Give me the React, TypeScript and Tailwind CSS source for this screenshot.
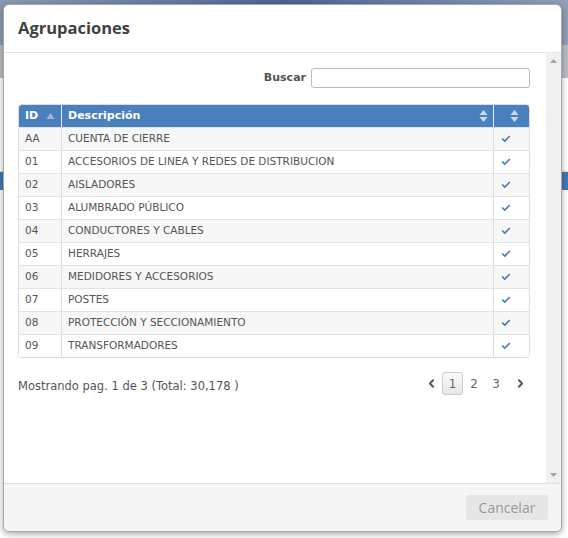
import { Check, ChevronLeft, ChevronRight } from 'lucide-react'

const rows = [
    { id: 'AA', desc: 'CUENTA DE CIERRE' },
    { id: '01', desc: 'ACCESORIOS DE LINEA Y REDES DE DISTRIBUCION' },
    { id: '02', desc: 'AISLADORES' },
    { id: '03', desc: 'ALUMBRADO PÚBLICO' },
    { id: '04', desc: 'CONDUCTORES Y CABLES' },
    { id: '05', desc: 'HERRAJES' },
    { id: '06', desc: 'MEDIDORES Y ACCESORIOS' },
    { id: '07', desc: 'POSTES' },
    { id: '08', desc: 'PROTECCIÓN Y SECCIONAMIENTO' },
    { id: '09', desc: 'TRANSFORMADORES' },
]

function SortBoth() {
    return (
        <svg width="9" height="14" viewBox="0 0 9 14">
            <path d="M4.5 1 L8.5 6 L0.5 6 Z" fill="#c9d9ee" />
            <path d="M4.5 13 L8.5 8 L0.5 8 Z" fill="#c9d9ee" />
        </svg>
    )
}

function SortUp() {
    return (
        <svg width="9" height="8" viewBox="0 0 9 8">
            <path d="M4.5 1 L8.5 7 L0.5 7 Z" fill="#9fb6d6" />
        </svg>
    )
}

export default function App() {
    return (
        <div className="w-[568px] h-[538px] relative overflow-hidden bg-white" style={{ fontFamily: '"DejaVu Sans", Verdana, sans-serif' }}>
            {/* page behind the dialog */}
            <div className="absolute inset-0 flex flex-col">
                <div className="h-[45px] bg-[linear-gradient(90deg,#8b9ab4,#4c6694,#8fa0bb)]" />
                <div className="h-[33px] bg-[#b8bec6]" />
                <div className="h-[94px] bg-white border-b border-[#ddd]" />
                <div className="h-[18px] bg-[#3f79b6]" />
                <div className="flex-1 bg-white" />
            </div>

            <div className="relative pt-[4px] pl-[3px]">
                <div className="w-[559px] h-[528px] bg-white rounded-[6px] border border-[#a8a8a8] shadow-[0_2px_6px_rgba(0,0,0,0.35)] flex flex-col overflow-hidden">
                    {/* header */}
                    <div className="h-[48px] shrink-0 border-b border-[#e5e5e5] flex items-center pl-[14px]">
                        <h3 className="text-[16.5px] font-bold text-[#3f3f3f]" style={{ fontFamily: '"Open Sans", sans-serif' }}>Agrupaciones</h3>
                    </div>

                    {/* body */}
                    <div className="flex-1 flex min-h-0">
                        <div className="flex-1 pl-[14px] pr-[16px] pt-[15px]">
                            <div className="flex justify-end items-center gap-[5px]">
                                <span className="text-[11px] font-bold text-[#555]">Buscar</span>
                                <input className="w-[219px] h-[20px] border border-[#bbb] rounded-[3px] outline-none" />
                            </div>

                            <div className="mt-[16px] border border-[#ddd] rounded-[4px] overflow-hidden">
                                <div className="flex h-[22px] bg-[#4a80bd] text-white text-[11px] font-bold">
                                    <div className="w-[43px] flex items-center justify-between pl-[6px] pr-[6px] border-r border-[#e6eef7]">
                                        <span>ID</span>
                                        <SortUp />
                                    </div>
                                    <div className="flex-1 flex items-center justify-between pl-[6px] pr-[5px] border-r border-[#e6eef7]">
                                        <span>Descripción</span>
                                        <SortBoth />
                                    </div>
                                    <div className="w-[35px] flex items-center justify-end pr-[10px]">
                                        <SortBoth />
                                    </div>
                                </div>
                                {rows.map((r, i) => (
                                    <div key={r.id} className={`flex h-[23px] border-t border-[#e3e3e3] text-[10.5px] text-[#555] ${i % 2 === 0 ? 'bg-[#f7f7f7]' : 'bg-white'}`}>
                                        <div className="w-[43px] flex items-center pl-[6px] border-r border-[#ddd]">{r.id}</div>
                                        <div className="flex-1 flex items-center pl-[6px] border-r border-[#ddd]">{r.desc}</div>
                                        <div className="w-[35px] flex items-center pl-[7px]">
                                            <Check className="w-[10px] h-[10px] text-[#4a7bbd]" strokeWidth={4} />
                                        </div>
                                    </div>
                                ))}
                            </div>

                            <div className="flex items-start justify-between mt-[14px]">
                                <span className="text-[11.5px] text-[#555] pt-[6px]">Mostrando pag. 1 de 3 (Total: 30,178 )</span>
                                <div className="flex items-center text-[12px] text-[#666] mr-[3px]">
                                    <ChevronLeft className="w-[13px] h-[13px] text-[#555] mr-[4px]" strokeWidth={3.5} />
                                    <span className="w-[21px] h-[23px] flex items-center justify-center rounded-[3px] border border-[#ccc] bg-[linear-gradient(#fafafa,#e8e8e8)]">1</span>
                                    <span className="w-[22px] text-center">2</span>
                                    <span className="w-[22px] text-center">3</span>
                                    <ChevronRight className="w-[13px] h-[13px] text-[#555] ml-[7px]" strokeWidth={3.5} />
                                </div>
                            </div>
                        </div>

                        {/* scrollbar */}
                        <div className="w-[15px] bg-[#f0f0f0] flex flex-col items-center justify-between py-[6px]">
                            <svg width="7" height="4" viewBox="0 0 7 4"><path d="M3.5 0 L7 4 L0 4 Z" fill="#a3a3a3" /></svg>
                            <svg width="7" height="4" viewBox="0 0 7 4"><path d="M0 0 L7 0 L3.5 4 Z" fill="#a3a3a3" /></svg>
                        </div>
                    </div>

                    {/* footer */}
                    <div className="h-[48px] shrink-0 border-t border-[#ddd] bg-[#f5f5f5] flex items-center justify-end pr-[13px]">
                        <button className="w-[82px] h-[25px] bg-[#e6e6e6] text-[#999] text-[14px] rounded-[2px]" style={{ fontFamily: '"Open Sans", sans-serif' }}>Cancelar</button>
                    </div>
                </div>
            </div>
        </div>
    )
}
